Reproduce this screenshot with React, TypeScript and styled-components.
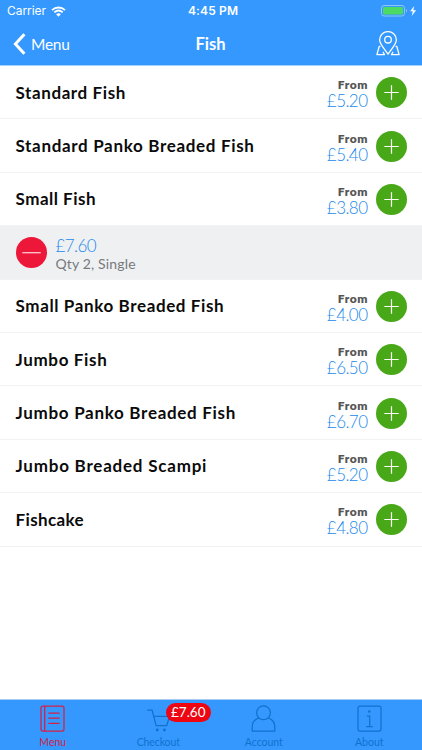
import React from 'react';
import styled, { createGlobalStyle } from 'styled-components';

const GlobalStyle = createGlobalStyle`
  *, *::before, *::after { box-sizing: border-box; }
  html, body { margin: 0; background: #fff; }
  body { font-family: Lato, 'Noto Sans', sans-serif; color: #0b0b0b; }
  button { appearance: none; border: 0; padding: 0; background: none; font: inherit; color: inherit; }
  svg { display: block; fill: none; }
`;

const Screen = styled.div`
  width: 422px;
  height: 750px;
  display: flex;
  flex-direction: column;
  overflow: hidden;
  background: #fff;
`;

const Header = styled.header`
  flex: none;
  height: 66px;
  color: #fff;
  background: #3498ff;
  border-bottom: 1px solid #a5d3ff;
`;

const StatusBar = styled.div`
  height: 22px;
  display: grid;
  grid-template-columns: 1fr auto 1fr;
  align-items: center;
  padding: 0 5px 0 7px;
  font: 400 12px/22px Inter, sans-serif;
`;

const Carrier = styled.div`
  display: flex;
  align-items: center;
  gap: 5px;
  letter-spacing: -0.05px;
`;

const Clock = styled.div`
  font-weight: 600;
  font-size: 12px;
  letter-spacing: 0.15px;
  padding-left: 2px;
`;

const Power = styled.div`
  display: flex;
  justify-content: flex-end;
`;

const NavBar = styled.div`
  height: 43px;
  display: grid;
  grid-template-columns: 1fr auto 1fr;
  align-items: center;
  padding: 0 22px 0 13px;
`;

const BackButton = styled.button`
  display: flex;
  align-items: center;
  gap: 5px;
  font-size: 15.5px;
  line-height: 22px;
  letter-spacing: -0.25px;
`;

const Title = styled.h1`
  margin: 0;
  padding-left: 8px;
  font-size: 16.5px;
  line-height: 22px;
  font-weight: 700;
`;

const MapButton = styled.button`
  justify-self: end;
`;

const List = styled.main`
  flex: 1;
  display: flex;
  flex-direction: column;
`;

const Row = styled.div`
  flex: none;
  height: 53.4px;
  display: flex;
  align-items: center;
  padding: 1px 15.5px 0 15.5px;
  border-bottom: 1px solid #f1f2f3;
`;

const BasketRow = styled(Row)`
  background: #eff0f2;
  gap: 9px;
`;

const Name = styled.h2<{ $track: number }>`
  flex: 1;
  margin: 0;
  font-size: 17px;
  line-height: 22px;
  font-weight: 700;
  letter-spacing: ${p => p.$track}px;
  white-space: nowrap;
`;

const Price = styled.div`
  margin-right: 8px;
  display: flex;
  flex-direction: column;
  align-items: flex-end;
  padding-top: 2px;
`;

const From = styled.span`
  font-size: 12px;
  line-height: 14px;
  font-weight: 800;
  letter-spacing: 0.6px;
  margin-right: -0.6px;
  color: #555;
`;

const Amount = styled.span`
  font-size: 17px;
  line-height: 17px;
  font-weight: 300;
  letter-spacing: -0.55px;
  color: #2389ec;
`;

const RoundButton = styled.button<{ $tone: string }>`
  flex: none;
  width: 31px;
  height: 31px;
  border-radius: 50%;
  background: ${p => p.$tone};
`;

const BasketText = styled.div`
  display: flex;
  flex-direction: column;
  padding-top: 4px;
`;

const Detail = styled.span`
  font-size: 14px;
  line-height: 19px;
  letter-spacing: 0.15px;
  color: #77797c;
`;

const TabBar = styled.nav`
  flex: none;
  height: 51px;
  display: grid;
  grid-template-columns: repeat(4, 1fr);
  background: #3498ff;
  border-top: 1px solid #a5ccf3;
`;

const Tab = styled.button<{ $active?: boolean }>`
  position: relative;
  display: flex;
  flex-direction: column;
  align-items: center;
  padding-top: 5px;
  color: ${p => (p.$active ? '#d32045' : '#1171cd')};
`;

const TabLabel = styled.span<{ $track: number }>`
  margin-top: 3px;
  font-size: 10.5px;
  line-height: 14px;
  letter-spacing: ${p => p.$track}px;
`;

const Badge = styled.span`
  position: absolute;
  left: 60px;
  top: 3px;
  width: 45.5px;
  height: 19px;
  border-radius: 10px;
  background: #ee0612;
  color: #fff;
  font-size: 13.5px;
  line-height: 18px;
  text-align: center;
`;

const WifiIcon = () => (
  <svg width="15" height="11" viewBox="0 0 15 11">
    <path d="M1 4.1C4.8.6 10.2.6 14 4.1M3.3 6.4c2.5-2.2 5.9-2.2 8.4 0" stroke="#fff" strokeWidth="1.8" />
    <path d="M5.1 8.2c1.5-1.2 3.3-1.2 4.8 0L7.5 10.7z" fill="#fff" />
  </svg>
);

const BatteryIcon = () => (
  <svg width="36" height="12" viewBox="0 0 36 12">
    <rect x=".5" y=".5" width="23" height="10.5" rx="2.6" stroke="#8fc6f5" />
    <rect x="2" y="2" width="20" height="7.5" rx="1.3" fill="#4cd964" />
    <path d="M25 4c1.4.5 1.4 3 0 3.5z" fill="#8fc6f5" />
    <path d="M33.2.9 29.1 6.3h2.7l-1.1 4.6 4.4-5.7h-2.8z" fill="#fff" />
  </svg>
);

const ChevronIcon = () => (
  <svg width="13" height="22" viewBox="0 0 13 22">
    <path d="M11.4 1.3 2.4 11l9 9.7" stroke="#fff" strokeWidth="3" />
  </svg>
);

const MapPinIcon = () => (
  <svg width="24" height="25" viewBox="0 0 24 25" stroke="#fff" strokeWidth="1.3" strokeLinejoin="round">
    <path d="M12 23.2C9.3 18.8 3.6 13.2 3.6 9a8.4 8.4 0 0 1 16.8 0c0 4.2-5.7 9.8-8.4 14.2z" />
    <circle cx="12" cy="8.7" r="3.3" />
    <path d="M4.4 15.3H3.2L.9 23.7h7.6L7 20.9M19.6 15.3h1.2l2.3 8.4h-7.6l1.5-2.8" />
  </svg>
);

const PlusIcon = () => (
  <svg width="31" height="31" viewBox="0 0 31 31" stroke="#fff" strokeWidth="1.2">
    <path d="M8.3 15.5h14.4M15.5 8.3v14.4" />
  </svg>
);

const MinusIcon = () => (
  <svg width="31" height="31" viewBox="0 0 31 31" stroke="#ffc9d1" strokeWidth="1.3">
    <path d="M6.3 15.7h18.4" />
  </svg>
);

const MenuIcon = () => (
  <svg width="25" height="27" viewBox="0 0 25 27" stroke="currentColor" strokeWidth="1.25" strokeLinecap="round">
    <rect x="1" y="1" width="23" height="25" rx="2" />
    <path d="M4.7 1v25M8.8 8h10.4M8.8 13.2h10.4M8.8 18.4h10.4" />
  </svg>
);

const CartIcon = () => (
  <svg width="25" height="27" viewBox="0 0 25 27" stroke="currentColor" strokeWidth="1.25" strokeLinejoin="round">
    <path d="M1.3 5h4.8l4 15.7h10.6l2.8-9.4H7.7" />
    <circle cx="11.2" cy="25" r="1.4" fill="currentColor" stroke="none" />
    <circle cx="18.4" cy="25" r="1.4" fill="currentColor" stroke="none" />
  </svg>
);

const AccountIcon = () => (
  <svg width="25" height="27" viewBox="0 0 25 27" stroke="currentColor" strokeWidth="1.25" strokeLinejoin="round">
    <circle cx="12.5" cy="7.7" r="6.9" />
    <path d="M8 12.9C3.3 14.4 1.2 18 1.2 22v4h22.6v-4c0-4-2.1-7.6-6.8-9.1" />
  </svg>
);

const InfoIcon = () => (
  <svg width="25" height="27" viewBox="0 0 25 27" stroke="currentColor" strokeWidth="1.25">
    <rect x="1" y="1" width="23" height="25" rx="2" />
    <path d="M9.8 11.2h2.9v10.3M9.2 21.5h6.6" />
    <circle cx="12.2" cy="6.5" r="1.2" fill="currentColor" stroke="none" />
  </svg>
);

type Dish = { name: string; price: string; track: number; basket?: { total: string; detail: string } };

const dishes: Dish[] = [
  { name: 'Standard Fish', price: '£5.20', track: 0.6 },
  { name: 'Standard Panko Breaded Fish', price: '£5.40', track: 0.67 },
  { name: 'Small Fish', price: '£3.80', track: 0.5, basket: { total: '£7.60', detail: 'Qty 2, Single' } },
  { name: 'Small Panko Breaded Fish', price: '£4.00', track: 0.62 },
  { name: 'Jumbo Fish', price: '£6.50', track: 0.65 },
  { name: 'Jumbo Panko Breaded Fish', price: '£6.70', track: 0.7 },
  { name: 'Jumbo Breaded Scampi', price: '£5.20', track: 0.78 },
  { name: 'Fishcake', price: '£4.80', track: 0.38 },
];

const DishEntry = ({ dish }: { dish: Dish }) => (
  <>
    <Row>
      <Name $track={dish.track}>{dish.name}</Name>
      <Price>
        <From>From</From>
        <Amount>{dish.price}</Amount>
      </Price>
      <RoundButton $tone="#49a818" aria-label={`Add ${dish.name}`}><PlusIcon /></RoundButton>
    </Row>
    {dish.basket && (
      <BasketRow>
        <RoundButton $tone="#ec1739" aria-label={`Remove ${dish.name}`}><MinusIcon /></RoundButton>
        <BasketText>
          <Amount>{dish.basket.total}</Amount>
          <Detail>{dish.basket.detail}</Detail>
        </BasketText>
      </BasketRow>
    )}
  </>
);

export default function App() {
  return (
    <Screen>
      <GlobalStyle />
      <Header>
        <StatusBar>
          <Carrier>Carrier <WifiIcon /></Carrier>
          <Clock>4:45 PM</Clock>
          <Power><BatteryIcon /></Power>
        </StatusBar>
        <NavBar>
          <BackButton><ChevronIcon />Menu</BackButton>
          <Title>Fish</Title>
          <MapButton aria-label="Map"><MapPinIcon /></MapButton>
        </NavBar>
      </Header>
      <List>
        {dishes.map(dish => <DishEntry key={dish.name} dish={dish} />)}
      </List>
      <TabBar>
        <Tab $active><MenuIcon /><TabLabel $track={0}>Menu</TabLabel></Tab>
        <Tab><CartIcon /><TabLabel $track={-0.1}>Checkout</TabLabel><Badge>£7.60</Badge></Tab>
        <Tab><AccountIcon /><TabLabel $track={-0.05}>Account</TabLabel></Tab>
        <Tab><InfoIcon /><TabLabel $track={0}>About</TabLabel></Tab>
      </TabBar>
    </Screen>
  );
}
